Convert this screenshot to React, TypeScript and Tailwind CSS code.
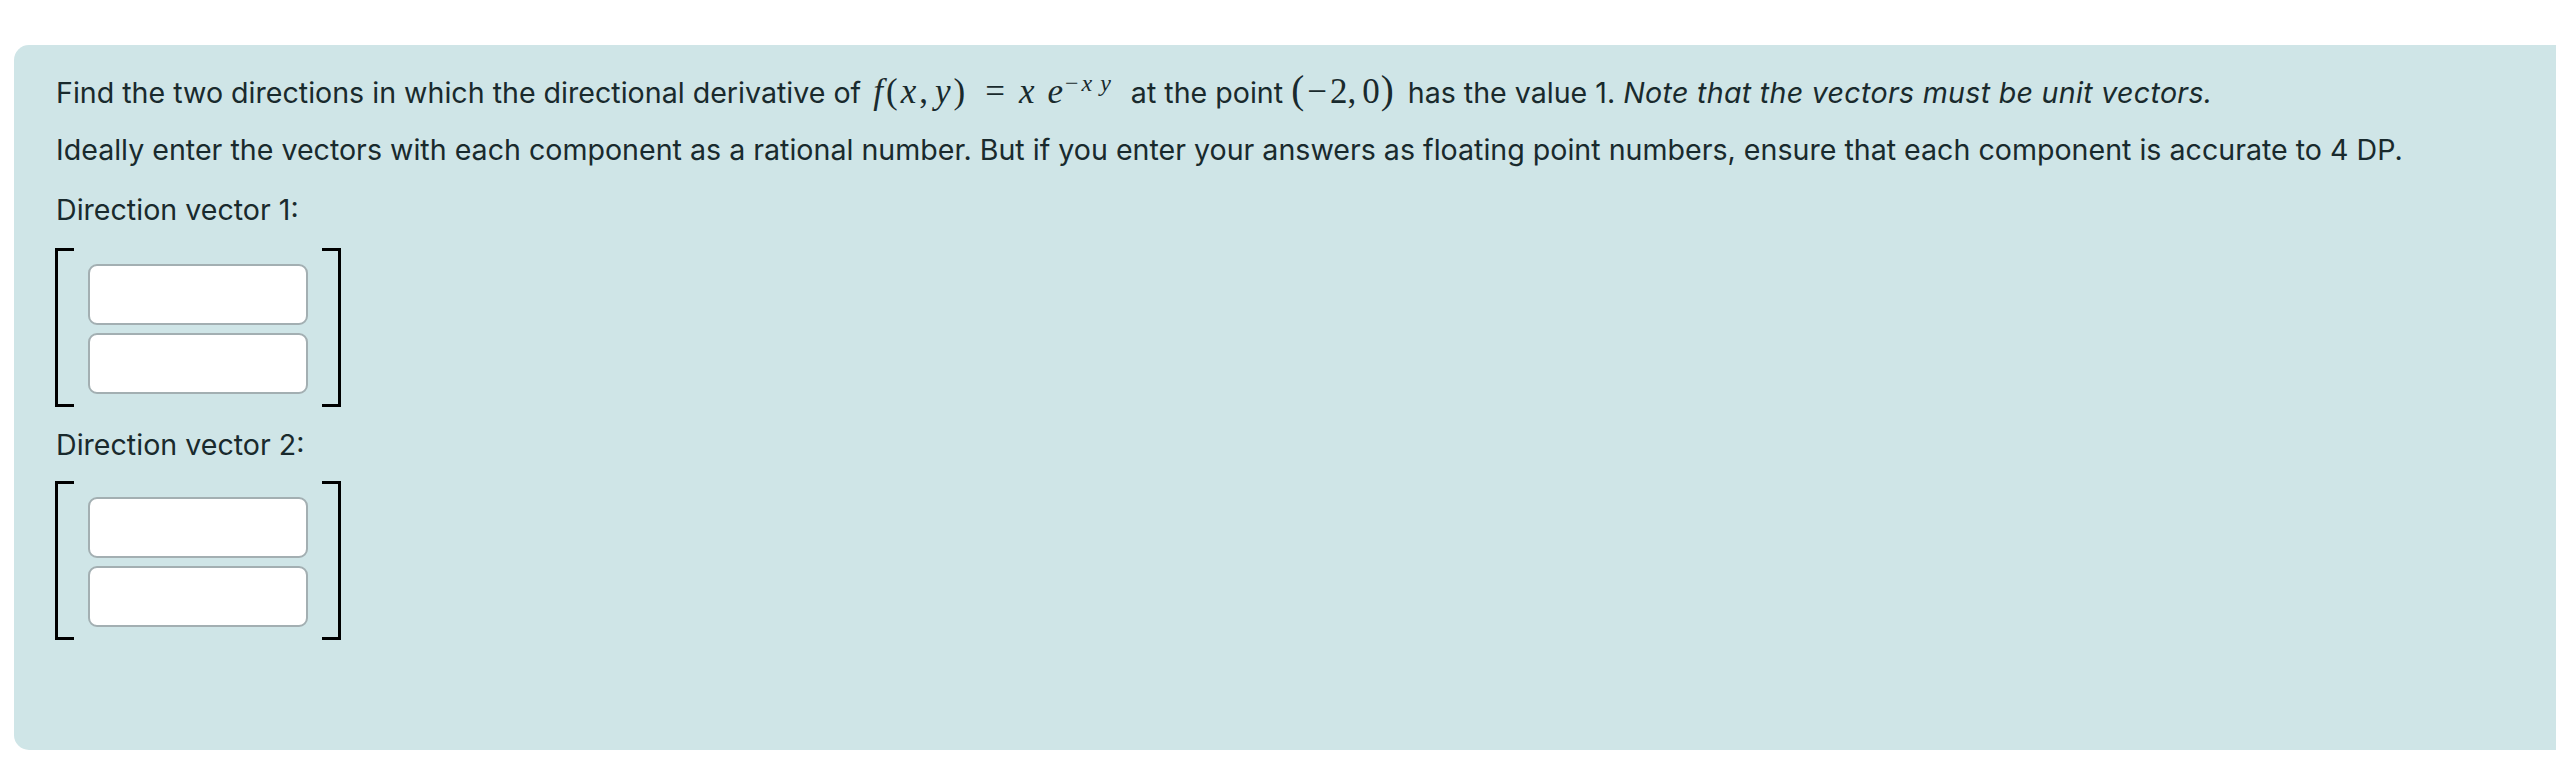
import React from 'react';

const mathFont = { fontFamily: '"Liberation Serif", "DejaVu Serif", serif' };

const Vector: React.FC = () => (
    <div className="flex">
        <div className="w-[19px] border-l-[3px] border-y-[3px] border-black" />
        <div className="flex flex-col gap-[8px] pt-[16px] pb-[13px] px-[14px]">
            <input type="text" className="w-[220px] h-[61px] bg-white border-2 border-[#a3afb2] rounded-[9px] outline-none" />
            <input type="text" className="w-[220px] h-[61px] bg-white border-2 border-[#a3afb2] rounded-[9px] outline-none" />
        </div>
        <div className="w-[19px] border-r-[3px] border-y-[3px] border-black" />
    </div>
);

export default function App() {
    return (
        <div
            className="w-full h-[778px] bg-white overflow-hidden pt-[45px] pl-[14px]"
            style={{ fontFamily: 'Inter, "Noto Sans", sans-serif' }}
        >
            <div className="h-[705px] bg-[#cfe5e7] rounded-l-[15px] pl-[42px] pt-[25px] text-[28.6px] text-[#192a2d]">
                <p className="h-[42px] leading-[42px] whitespace-nowrap">
                    Find the two directions in which the directional derivative of{' '}
                    <span className="text-[35px] leading-none ml-[4px]" style={mathFont}>
                        <span className="tracking-[3px]">
                            <i>f</i>(<i>x</i>,<i className="ml-[4px]">y</i>)
                        </span>
                        <span className="ml-[17px] mr-[14px]">=</span>
                        <i>x</i>
                        <i className="ml-[13px]">e</i>
                        <span className="text-[24px] align-[12px] ml-[2px] tracking-[2px]">
                            −<i className="ml-[1px]">x</i>
                            <i className="ml-[6px]">y</i>
                        </span>
                    </span>
                    <span className="ml-[18px]">at the point</span>{' '}
                    <span className="text-[35px] leading-none mr-[6px]" style={mathFont}>
                        <span className="text-[39px]">(</span>
                        <span className="ml-[3px] mr-[3px]">−</span>2,<span className="ml-[6px]">0</span>
                        <span className="text-[39px] ml-[1px]">)</span>
                    </span>{' '}
                    has the value 1. <i className="tracking-[0.3px]">Note that the vectors must be unit vectors.</i>
                </p>
                <p className="h-[42px] leading-[42px] mt-[17px] whitespace-nowrap">
                    Ideally enter the vectors with each component as a rational number. But if you enter your answers as floating point numbers, ensure that each component is accurate to 4 DP.
                </p>
                <p className="h-[42px] leading-[42px] mt-[18px]">Direction vector 1:</p>
                <div className="mt-[17px] -ml-[1px]">
                    <Vector />
                </div>
                <p className="h-[42px] leading-[42px] mt-[17px]">Direction vector 2:</p>
                <div className="mt-[15px] -ml-[1px]">
                    <Vector />
                </div>
            </div>
        </div>
    );
}
